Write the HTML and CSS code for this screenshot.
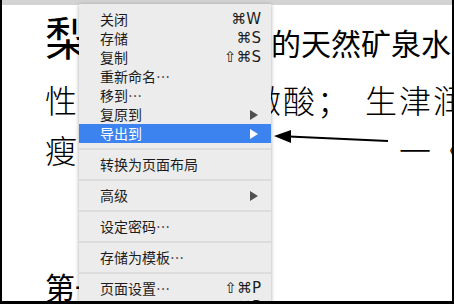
FILE: index.html
```html
<html>
<head>
<meta name="viewport" content="width=device-width, initial-scale=1.0" />
<link rel="stylesheet" href="styles.css">
</head>
<body>
<div class="screen">
  <div class="topbar"></div>
  <div class="doc">
    <p class="title"><span class="big">梨</span>是大自然赐予的天然矿泉水</p>
    <p class="hand">性凉，味甘、微酸；<span class="push">生津润燥</span></p>
    <p class="hand">瘦<span class="tail">一《</span></p>
    <p class="chapter">第一章</p>
  </div>

  <svg class="arrow" width="454" height="304" viewBox="0 0 454 304">
    <polygon points="274,136 291,130 291,143" fill="#000"/>
    <line x1="289" y1="136.5" x2="388" y2="141" stroke="#000" stroke-width="2"/>
  </svg>

  <div class="menu">
    <div class="item"><span>关闭</span><span class="key">⌘W</span></div>
    <div class="item"><span>存储</span><span class="key">⌘S</span></div>
    <div class="item"><span>复制</span><span class="key">⇧⌘S</span></div>
    <div class="item"><span>重新命名…</span></div>
    <div class="item"><span>移到…</span></div>
    <div class="item"><span>复原到</span><i class="tri"></i></div>
    <div class="item active"><span>导出到</span><i class="tri"></i></div>
    <div class="sep"></div>
    <div class="item"><span>转换为页面布局</span></div>
    <div class="sep"></div>
    <div class="item"><span>高级</span><i class="tri"></i></div>
    <div class="sep"></div>
    <div class="item"><span>设定密码…</span></div>
    <div class="sep"></div>
    <div class="item"><span>存储为模板…</span></div>
    <div class="sep"></div>
    <div class="item"><span>页面设置…</span><span class="key">⇧⌘P</span></div>
    <div class="item"><span>打印…</span><span class="key">⌘P</span></div>
  </div>
</div>
</body>
</html>
```

FILE: styles.css
```css
body {
  margin: 0;
  background: #000;
  width: 454px;
  height: 304px;
  overflow: hidden;
}

.screen {
  position: relative;
  margin-left: 2px;
  width: 450px;
  height: 301px;
  background: #fff;
  overflow: hidden;
  font-family: "Noto Sans CJK SC", sans-serif;
  color: #000;
}

.topbar {
  height: 5px;
  background: #d3d3d3;
}

.doc {
  padding-left: 43px;
  white-space: nowrap;
}

.doc p {
  margin: 0;
  line-height: 1;
}

.title {
  margin-top: 7px !important;
  font-size: 30px;
}

.big {
  font-size: 46px;
}

.hand {
  font-size: 32px;
  font-weight: 300;
  letter-spacing: 2px;
}

.hand:nth-child(2) {
  margin-top: 25px !important;
}

.hand:nth-child(3) {
  margin-top: 18px !important;
}

.push {
  margin-left: 14px;
}

.tail {
  margin-left: 320px;
}

.chapter {
  margin-top: 106px !important;
  font-size: 30px;
}

.arrow {
  position: absolute;
  left: -2px;
  top: 0;
}

.menu {
  position: absolute;
  left: 77px;
  top: 4px;
  width: 192px;
  padding-top: 6px;
  background: #ececec;
  box-shadow: 0 1px 4px rgba(0, 0, 0, 0.35);
  font-size: 14px;
  color: #1c1c1c;
}

.item {
  height: 19px;
  display: flex;
  align-items: center;
  justify-content: space-between;
  padding: 0 10px 0 21px;
  line-height: 19px;
}

.item.active {
  background: #3d83f0;
  color: #fff;
}

.key {
  font-family: "DejaVu Sans", sans-serif;
  font-size: 15px;
}

.tri {
  width: 0;
  height: 0;
  margin-right: 3px;
  border-top: 5px solid transparent;
  border-bottom: 5px solid transparent;
  border-left: 8px solid #505050;
}

.item.active .tri {
  border-left-color: #fff;
}

.sep {
  height: 2px;
  margin: 5px 0;
  background: #dcdcdc;
}
```
